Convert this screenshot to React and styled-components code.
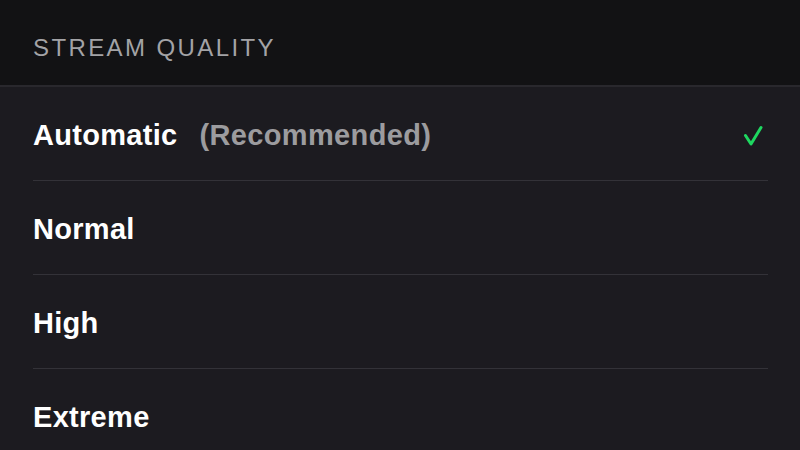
import React from "react";
import styled, { createGlobalStyle } from "styled-components";

const options = [
  { label: "Automatic", note: "(Recommended)", selected: true },
  { label: "Normal" },
  { label: "High" },
  { label: "Extreme" },
];

const App = () => (
  <Screen>
    <GlobalStyle />
    <Header>
      <HeaderTitle>STREAM QUALITY</HeaderTitle>
    </Header>
    <List>
      {options.map((o) => (
        <Row key={o.label}>
          <Label>
            {o.label}
            {o.note && <Note>{o.note}</Note>}
          </Label>
          {o.selected && <Check />}
        </Row>
      ))}
    </List>
  </Screen>
);

const Check = () => (
  <svg width="20" height="22" viewBox="0 0 20 22">
    <path
      d="M2.5 10.5 L8 19 L18 2.5"
      fill="none"
      stroke="#1ed760"
      strokeWidth="3"
      strokeLinecap="round"
      strokeLinejoin="round"
    />
  </svg>
);

const GlobalStyle = createGlobalStyle`
  html, body {
    margin: 0;
    padding: 0;
    background: #1c1b20;
  }
  body {
    font-family: "Liberation Sans", Arial, sans-serif;
  }
`;

const Screen = styled.div`
  width: 800px;
  height: 450px;
  overflow: hidden;
  background: #1c1b20;
`;

const Header = styled.div`
  height: 87px;
  box-sizing: border-box;
  display: flex;
  align-items: center;
  padding: 11px 33px 0;
  background: #121214;
  border-bottom: 2px solid #29282d;
`;

const HeaderTitle = styled.h2`
  margin: 0;
  font-size: 24px;
  font-weight: 400;
  letter-spacing: 2.4px;
  color: #a3a3a6;
`;

const List = styled.div`
  padding: 0 32px 0 33px;
`;

const Row = styled.div`
  height: 94px;
  box-sizing: border-box;
  display: flex;
  align-items: center;
  justify-content: space-between;
  border-bottom: 1px solid #333238;
  padding: 4px 5px 0 0;
`;

const Label = styled.span`
  font-size: 29px;
  font-weight: 700;
  letter-spacing: 0.3px;
  color: #ffffff;
`;

const Note = styled.span`
  margin-left: 22px;
  letter-spacing: 0.35px;
  color: #9c9c9f;
`;

export default App;
